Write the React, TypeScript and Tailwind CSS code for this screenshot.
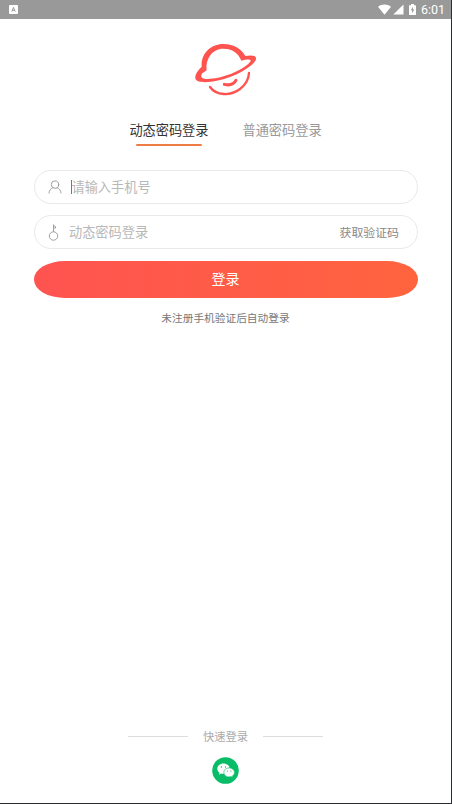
import React, { useState } from 'react';

type LoginMode = 'dynamic' | 'password';

const StatusBar = () => (
  <div className="flex h-[19px] items-center justify-between bg-[#999999] pl-[9px] pr-[6px]">
    <svg className="h-[9px] w-[9px]" viewBox="0 0 9 9">
      <rect width="9" height="9" rx="1" fill="#fff" />
      <path d="M2.8 6.6 4.5 2.4 6.2 6.6M3.4 5.3h2.2" fill="none" stroke="#999" strokeWidth="1" />
    </svg>
    <div className="flex items-center">
      <svg className="h-[11px] w-[13px]" viewBox="0 0 13 11">
        <path d="M0 2.8C3.7-.2 9.3-.2 13 2.8L6.5 10.8Z" fill="#fff" />
      </svg>
      <svg className="ml-[2px] h-[11px] w-[11px]" viewBox="0 0 11 11">
        <path d="M10.5.5v10H.3Z" fill="#fff" />
      </svg>
      <svg className="ml-[5px] h-[11px] w-[7px]" viewBox="0 0 7 11">
        <path d="M2 0h3v1.2h1.500a.5.5 0 0 1 .5.5v8.800a.5.5 0 0 1-.5.5h-6a.5.5 0 0 1-.5-.5V1.700a.5.5 0 0 1 .5-.5H2Z" fill="#fff" />
        <path d="M4 2.8 1.8 6.3h1.4v2.9l2.2-3.700H4Z" fill="#999" />
      </svg>
      <span className="ml-[5px] font-['Roboto','Liberation_Sans',sans-serif] text-[12.5px] leading-[19px] text-white">6:01</span>
    </div>
  </div>
);

const PlanetLogo = () => (
  <svg className="h-[66px] w-[80px]" viewBox="0 0 240 198" fill="none">
    <path
      d="M47 92C44 56 71 24 112 24c33 0 55 16 66 36 17-3 31-2 32 6 2 14-30 38-72 55-45 18-101 24-109 9-4-9 2-23 18-38Z"
      fill="#ff5350"
    />
    <path
      d="M62 103C58 68 79 38 112 38c27 0 46 14 54 36 13-3 25-5 28-1 2 6-22 27-60 41-38 14-77 19-86 11-4-4-2-9 1-13Z"
      fill="#fff"
    />
    <path d="M72 153c18 26 61 28 90 6 17-13 26-29 27-48" stroke="#ff5350" strokeWidth="7" strokeLinecap="round" />
    <path d="M115 145c16 4 29-1 35-12" stroke="#ff5350" strokeWidth="9" strokeLinecap="round" />
  </svg>
);

const UserIcon = () => (
  <svg className="h-[14px] w-[14px]" viewBox="0 0 14 14" fill="none" stroke="#a0a0a0" strokeLinecap="round">
    <circle cx="7" cy="4.6" r="3.7" />
    <path d="M1 13c.3-2.700 1.600-4.500 3.900-5.300M13 13c-.3-2.700-1.600-4.500-3.900-5.300" />
  </svg>
);

const KeyIcon = () => (
  <svg className="h-[17px] w-[14px]" viewBox="0 0 14 17" fill="none" stroke="#a0a0a0">
    <circle cx="5.5" cy="12" r="4.2" />
    <path d="M5.5 7.8V.5M5.5 1.500l2 1v1.500h-2" />
  </svg>
);

const WechatIcon = () => (
  <svg className="h-[27px] w-[27px]" viewBox="0 0 27 27">
    <circle cx="13.5" cy="13.5" r="13.3" fill="#09bd68" />
    <path d="M11.5 6.500c-3.500 0-6.200 2.300-6.200 5.200 0 1.700.9 3.100 2.300 4l-.6 2 2.300-1.200c.7.2 1.400.3 2.200.3 3.500 0 6.200-2.300 6.200-5.100s-2.700-5.200-6.200-5.200Z" fill="#fff" />
    <path
      d="M17.1 10.900c-3 0-5.300 2-5.300 4.500s2.300 4.500 5.300 4.500c.7 0 1.300-.1 1.900-.3l1.900 1-.5-1.700c1.300-.8 2.100-2.100 2.100-3.500 0-2.500-2.400-4.500-5.400-4.500Z"
      fill="#fff"
      stroke="#09bd68"
      strokeWidth=".6"
    />
    <g fill="#09bd68">
      <circle cx="9.4" cy="10" r=".7" />
      <circle cx="13.5" cy="10" r=".7" />
      <circle cx="15.4" cy="14" r=".6" />
      <circle cx="18.9" cy="14" r=".6" />
    </g>
  </svg>
);

type TabProps = {
  label: string;
  active: boolean;
  onClick: () => void;
};

const Tab = ({ label, active, onClick }: TabProps) => (
  <button onClick={onClick} className="flex flex-col items-center">
    <span className={`text-[13.2px] leading-5 ${active ? 'text-[#333333]' : 'text-[#999999]'}`}>{label}</span>
    <span className={`mt-1 h-[2px] w-[66px] rounded-full ${active ? 'bg-[#f07c45]' : 'bg-transparent'}`} />
  </button>
);

const App = () => {
  const [mode, setMode] = useState<LoginMode>('dynamic');

  return (
    <div className="flex h-screen flex-col border-b border-r border-[#2c2d30] bg-white font-['Noto_Sans_CJK_SC',sans-serif]">
      <StatusBar />
      <main className="flex grow flex-col px-[33.5px]">
        <div className="flex justify-center pt-[17px]">
          <PlanetLogo />
        </div>
        <div className="mt-[18px] flex justify-center gap-[34px]">
          <Tab label="动态密码登录" active={mode === 'dynamic'} onClick={() => setMode('dynamic')} />
          <Tab label="普通密码登录" active={mode === 'password'} onClick={() => setMode('password')} />
        </div>
        <div className="mt-6 flex h-[34px] items-center rounded-full border border-[#e9e9e9] pl-[13px]">
          <UserIcon />
          <span className="ml-[9px] h-[14px] w-px bg-[#777777]" />
          <input
            placeholder="请输入手机号"
            className="min-w-0 grow text-[13.2px] leading-5 outline-none placeholder:text-[#b8b8b8]"
          />
        </div>
        <div className="mt-[11px] flex h-[34px] items-center rounded-full border border-[#e9e9e9] pl-[13px] pr-[17.5px]">
          <KeyIcon />
          <input
            placeholder="动态密码登录"
            className="ml-[7.5px] min-w-0 grow text-[13.2px] leading-5 outline-none placeholder:text-[#b8b8b8]"
          />
          <button className="text-[11.9px] leading-5 text-[#888888]">获取验证码</button>
        </div>
        <button className="mt-3 h-[36.5px] rounded-[31px/18.25px] bg-linear-to-r from-[#ff5350] to-[#ff643e] pb-[2px] text-[14px] leading-5 text-white">
          登录
        </button>
        <p className="mt-[10.5px] text-center text-[10.7px] leading-5 text-[#777777]">未注册手机验证后自动登录</p>
        <footer className="mt-auto flex flex-col items-center pb-[19.5px]">
          <div className="flex items-center gap-[15px]">
            <span className="h-px w-[60px] bg-[#dddddd]" />
            <span className="text-[11.3px] leading-5 text-[#aaaaaa]">快速登录</span>
            <span className="h-px w-[60px] bg-[#dddddd]" />
          </div>
          <button className="mt-[10.5px]">
            <WechatIcon />
          </button>
        </footer>
      </main>
    </div>
  );
};

export default App;
